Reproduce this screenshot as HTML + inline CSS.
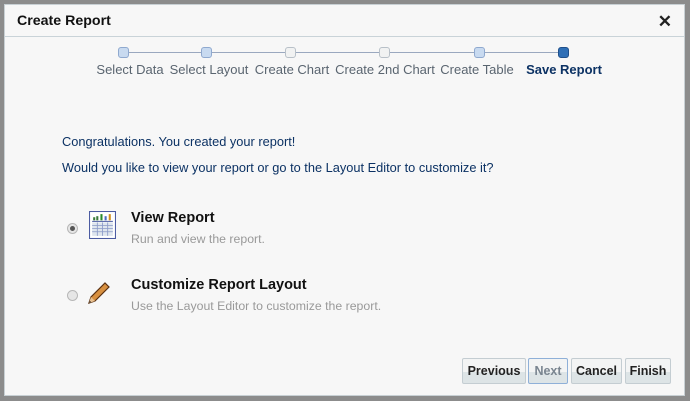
<!DOCTYPE html>
<html><head><style>
body{margin:0;width:690px;height:401px;background:#8c8c8c;font-family:"Liberation Sans",sans-serif;position:relative;overflow:hidden}
.dlg{position:absolute;left:4px;top:4px;width:681px;height:392px;background:#f7f7f7;border:1px solid #c8d0d4;box-sizing:border-box}
.title{position:absolute;left:12px;top:8px;font-size:14.2px;font-weight:bold;color:#111}
.x{position:absolute;right:12px;top:7px;font-size:17px;font-weight:bold;color:#222}
.hr{position:absolute;left:0;right:0;top:31px;border-top:1px solid #c9d3d8}
.line{position:absolute;top:47px;left:119px;width:440px;border-top:1px solid #9aa8bf}
.n{position:absolute;top:42px;width:11px;height:11px;border-radius:3px;border:1px solid #8fa9cf;background:#c8daf0;box-sizing:border-box}
.n.w{background:#f1f2f2;border-color:#b8c0c8}
.n.c{background:#2f6fb6;border-color:#1f4f8a}
.l{position:absolute;top:57px;font-size:13px;color:#5a6570;transform:translateX(-50%);white-space:nowrap}
.msg{position:absolute;left:57px;font-size:12.8px;color:#0c3264}
.rad{position:absolute;width:11px;height:11px;border-radius:50%;border:1px solid #b7b7b7;background:#e6e6e6;box-sizing:border-box}
.h{position:absolute;left:126px;font-size:14.5px;font-weight:bold;color:#111}
.s{position:absolute;left:126px;font-size:12.3px;color:#999}
.b{position:absolute;top:353px;height:26px;border:1px solid #c4cdd2;border-radius:2px;background:linear-gradient(#f3f4f4 55%,#dde4e6 55%);box-sizing:border-box;font-size:12.5px;font-weight:bold;color:#222;text-align:center;line-height:24px}
</style></head><body>
<div class="dlg">
<div class="title">Create Report</div>
<div class="x">✕</div>
<div class="hr"></div>
<div class="line"></div>
<div class="n" style="left:113px"></div>
<div class="n" style="left:196px"></div>
<div class="n w" style="left:280px"></div>
<div class="n w" style="left:374px"></div>
<div class="n" style="left:469px"></div>
<div class="n c" style="left:553px"></div>
<div class="l" style="left:125px">Select Data</div>
<div class="l" style="left:204px">Select Layout</div>
<div class="l" style="left:287px">Create Chart</div>
<div class="l" style="left:380px">Create 2nd Chart</div>
<div class="l" style="left:472px">Create Table</div>
<div class="l" style="left:559px;color:#0c3264;font-weight:bold">Save Report</div>
<div class="msg" style="top:129px">Congratulations. You created your report!</div>
<div class="msg" style="top:155px">Would you like to view your report or go to the Layout Editor to customize it?</div>
<div class="rad" style="left:62px;top:218px"><div style="width:5px;height:5px;border-radius:50%;background:#555;margin:2px"></div></div>
<svg style="position:absolute;left:84px;top:206px" width="27" height="28" viewBox="0 0 26 27"><rect x="0.5" y="0.5" width="25" height="26" fill="#fff" stroke="#4a5aa0"/><path d="M3 10h20" stroke="#4a5aa0"/><rect x="4" y="6" width="2" height="3" fill="#3a7a3a"/><rect x="7" y="5" width="2" height="4" fill="#3a7a3a"/><rect x="11" y="3" width="2" height="6" fill="#2a8a2a"/><rect x="15" y="5" width="2" height="4" fill="#4a6ac0"/><rect x="19" y="3" width="2" height="6" fill="#d09020"/><rect x="3" y="11" width="20" height="13" fill="#dfe6ee"/><path d="M3 14h20M3 17h20M3 20h20M8 11v13M13 11v13M18 11v13" stroke="#8a9ac8" stroke-width="0.8"/></svg>
<div class="h" style="top:205px">View Report</div>
<div class="s" style="top:227px">Run and view the report.</div>
<div class="rad" style="left:62px;top:285px"></div>
<svg style="position:absolute;left:80px;top:274px" width="28" height="28" viewBox="0 0 28 28"><path d="M4 24l2-6 14-14 4 4-14 14z" fill="#d89040" stroke="#5a3010" stroke-width="1.2"/><path d="M4 24l2-6 4 4z" fill="#e8c090"/><path d="M4 24l1-2 1 1z" fill="#222"/></svg>
<div class="h" style="top:272px">Customize Report Layout</div>
<div class="s" style="top:294px">Use the Layout Editor to customize the report.</div>
<div class="b" style="left:457px;width:64px">Previous</div>
<div class="b" style="left:523px;width:40px;color:#7a8590;border-color:#8fb0d8">Next</div>
<div class="b" style="left:566px;width:51px">Cancel</div>
<div class="b" style="left:620px;width:46px">Finish</div>
</div>
</body></html>
